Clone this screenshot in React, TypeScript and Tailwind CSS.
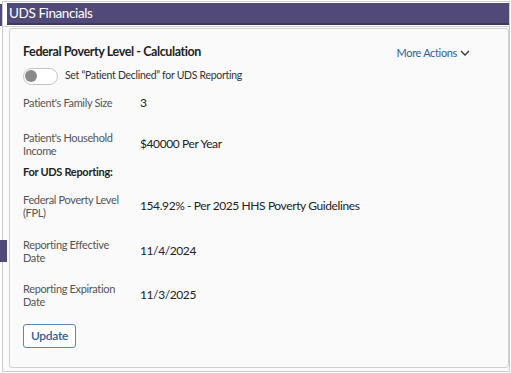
import React from "react";

const rows = [
  { label: ["Patient's Family Size"], value: "3" },
  { label: ["Patient's Household", "Income"], value: "$40000 Per Year" },
];

const udsRows = [
  { label: ["Federal Poverty Level", "(FPL)"], value: "154.92% - Per 2025 HHS Poverty Guidelines" },
  { label: ["Reporting Effective", "Date"], value: "11/4/2024" },
  { label: ["Reporting Expiration", "Date"], value: "11/3/2025" },
];

const Row = ({ label, value, className }: { label: string[]; value: string; className?: string }) => (
  <div className={"flex items-center " + (className || "")}>
    <div className="w-[118px] text-[11px] leading-[13px] tracking-[-0.35px] text-[#555]">
      {label.map((l, i) => (
        <div key={i}>{l}</div>
      ))}
    </div>
    <div className="-ml-[1px] text-[12px] leading-[15px] tracking-[-0.4px] text-[#222]">{value}</div>
  </div>
);

const App = () => {
  return (
    <div
      className="relative w-[511px] h-[373px] bg-white overflow-hidden"
      style={{ fontFamily: "Lato, 'Open Sans', sans-serif" }}
    >
      {/* side tab markers */}
      <div className="absolute left-0 top-[4px] w-[2px] h-[22px] bg-[#514a78]" />
      <div className="absolute left-0 top-[240px] w-[7px] h-[22px] bg-[#514a78]" />

      <div className="ml-[2px] mt-[1px] w-[508px] h-[371px] border border-[#cccccc] bg-[#fafafa] flex flex-col">
        <div className="bg-white pt-[1px] border-b border-[#d0d0d0] pb-[1px]">
          <div className="ml-[4px] h-[22px] bg-[#514a78] border-b-2 border-[#3e3764] flex items-center pl-[2px] text-white text-[13.5px] tracking-[-0.4px]">
            UDS Financials
          </div>
        </div>

        <div className="ml-[6px] mt-[1px] flex-1 mb-[3px] border border-[#cfcfcf] rounded-[3px] bg-[#fafafa] pl-[13px] pt-[14px]">
          <div className="flex items-start justify-between pr-[38px]">
            <div className="font-bold text-[12.5px] leading-[17px] tracking-[-0.4px] text-[#222]">
              Federal Poverty Level - Calculation
            </div>
            <div className="mt-[2px] flex items-center gap-[3px] text-[11px] tracking-[-0.35px] text-[#2f5e99]">
              More Actions
              <svg width="10" height="7" viewBox="0 0 10 7" fill="none">
                <path d="M1 1l4 4 4-4" stroke="#333" strokeWidth="1.3" />
              </svg>
            </div>
          </div>

          <div className="mt-[6px] flex items-center">
            <div className="w-[35px] h-[17px] rounded-full border border-[#c4c4c4] bg-white flex items-center pl-[1px]">
              <div className="w-[12px] h-[12px] rounded-full bg-[#8a8a8a]" />
            </div>
            <div className="ml-[7px] text-[10.5px] tracking-[-0.3px] text-[#333]">
              Set “Patient Declined” for UDS Reporting
            </div>
          </div>

          <Row className="mt-[10px]" label={rows[0].label} value={rows[0].value} />
          <Row className="mt-[21px]" label={rows[1].label} value={rows[1].value} />

          <div className="mt-[8px] font-bold text-[11px] leading-[13px] tracking-[-0.3px] text-[#222]">For UDS Reporting:</div>

          <Row className="mt-[15px]" label={udsRows[0].label} value={udsRows[0].value} />
          <Row className="mt-[19px]" label={udsRows[1].label} value={udsRows[1].value} />
          <Row className="mt-[18px]" label={udsRows[2].label} value={udsRows[2].value} />

          <button className="mt-[16px] w-[53px] h-[24px] border border-[#5a87b8] rounded-[3px] bg-white text-[12px] font-semibold tracking-[-0.3px] text-[#2f5e99]">
            Update
          </button>
        </div>
      </div>
    </div>
  );
};

export default App;
